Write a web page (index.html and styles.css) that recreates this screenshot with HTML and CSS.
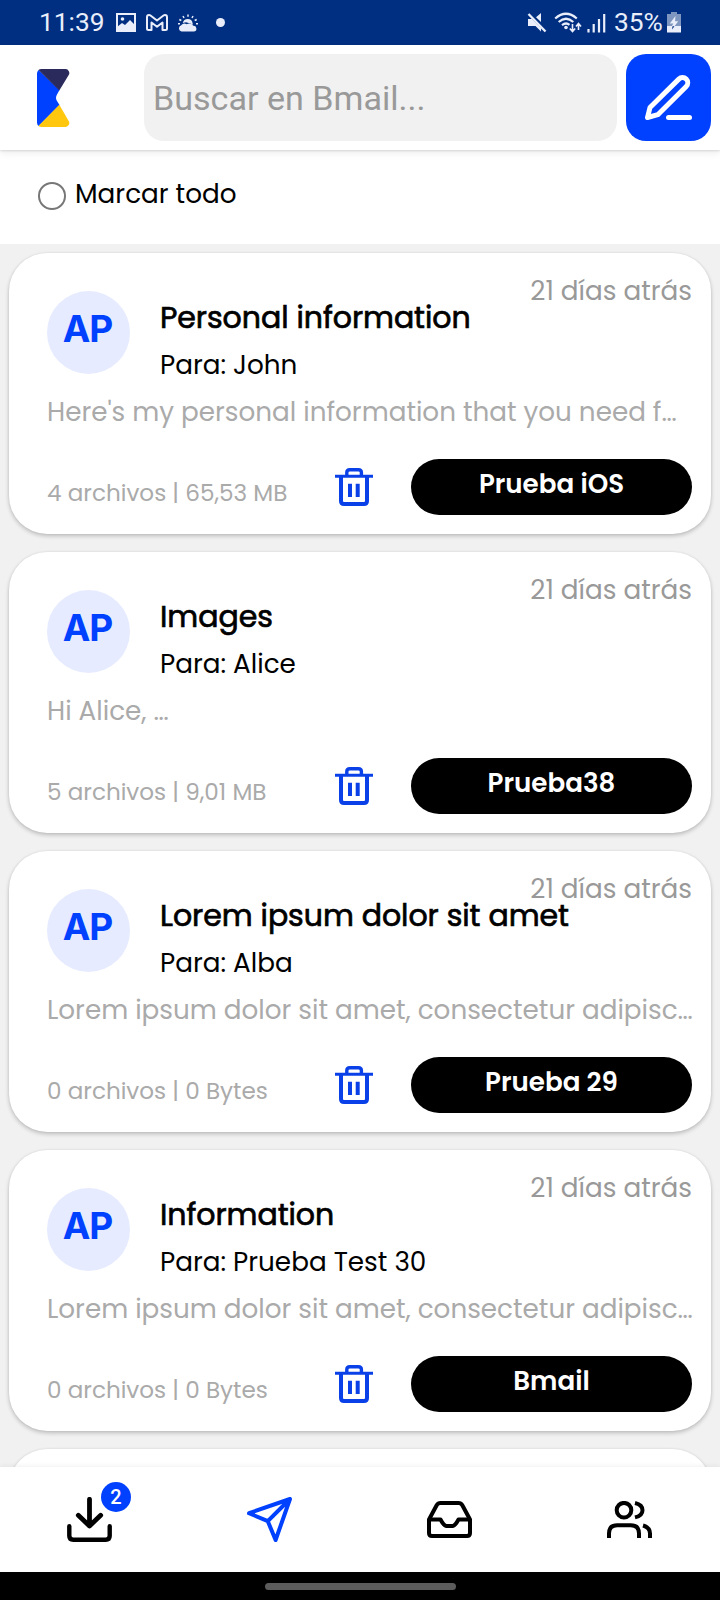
FILE: index.html
```html
<!DOCTYPE html>
<html lang="es">
<head>
<meta charset="utf-8">
<title>Bmail</title>
<link rel="stylesheet" href="styles.css">
</head>
<body>
<svg class="defs" aria-hidden="true">
  <symbol id="trash" viewBox="0 0 38 38">
    <path d="M0 8.3H38" stroke-width="3"/>
    <path d="M11.8 8V4.5Q11.8 1.7 14.8 1.7H23.4Q26.4 1.7 26.4 4.5V8" stroke-width="3.4"/>
    <path d="M6 8V33Q6 36 9 36H29Q32 36 32 33V8M15 15.7V29M22.7 15.7V29" stroke-width="4"/>
  </symbol>
</svg>
<div class="screen">
  <div class="status">
    <span class="clock">11:39</span>
    <svg class="st-image" width="20" height="19" viewBox="0 0 20 19"><path d="M1 1h18v17H1z" fill="none" stroke="#e9eefa" stroke-width="2"/><circle cx="6.5" cy="6" r="1.8"/><path d="M1 14l5-4 3 2 5-5 5 5v6H1z"/></svg>
    <svg class="st-mail" width="22" height="17" viewBox="0 0 22 17" fill="none"><path d="M1 3.2v11.3q0 1.5 1.5 1.5h3V8.5l5.500 4.200 5.500-4.200V16h3q1.500 0 1.500-1.500V3.200Q21 1 19 1q-.8 0-1.500.5L11 6.500 4.500 1.500Q3.800 1 3 1 1 1 1 3.200z" stroke="#e9eefa" stroke-width="2" stroke-linejoin="round"/></svg>
    <svg class="st-weather" width="22" height="18" viewBox="0 0 22 18"><path d="M4.500 17.500a3.200 3.200 0 0 1-.3-6.200 4 4 0 0 1 5.500-1 4.500 4.500 0 0 1 6.500 1.500 2.900 2.900 0 0 1 1 5.700z"/><path d="M5.800 9a5 5 0 0 1 9.800.2l.4 1.500-2.500-1.200-4.500-1.300z"/><path d="M11 .5v2.200M6 2l1 2M16 2l-1 2M2.300 5.500l2 1M19.700 5.500l-2 1M1 9.800h2M19 9.800h2" stroke="#e9eefa" stroke-width="1.500"/></svg>
    <span class="dot"></span>
    <svg class="st-mute" width="20" height="21" viewBox="0 0 20 21"><path d="M1 7h4l9 9v3.500L8.500 14H1zM9 5.300L14 1v9z"/><path d="M1.500 2L18.500 19.500" stroke="#e9eefa" stroke-width="2.400"/><path d="M3.800 1.300L19.800 17.500" stroke="#002f81" stroke-width="1"/></svg>
    <svg class="st-wifi" width="28" height="21" viewBox="0 0 28 21"><path d="M1.200 6.500Q12 -3 22.800 6.500M4.700 10Q12 3.500 19.300 10M8 13.200Q12 10 15.500 12.800" fill="none" stroke="#e9eefa" stroke-width="2.200"/><circle cx="12" cy="15.500" r="1.800"/><path d="M18.500 12v7M15.800 16.500l2.700 3 2.700-3M24.500 18v-6M22 14.500l2.500-3 2.500 3" fill="none" stroke="#e9eefa" stroke-width="1.600"/></svg>
    <svg class="st-signal" width="19" height="20" viewBox="0 0 19 20"><path d="M1.500 16v3.500M6.700 11v8.500M12 6v13.500M17.200 1v18.500" stroke="#e9eefa" stroke-width="2.200"/></svg>
    <span class="level">35%</span>
    <svg class="st-battery" width="14" height="21" viewBox="0 0 14 21"><path d="M4 0h6v2h4v12H0V2h4z" fill="#7f97c0"/><path d="M0 14h14v6.500H0z"/><path d="M8.500 4L2.800 11.500h3.500L5 14l2.500.2 3.700-5H8z"/><path d="M5.500 14.300L5 17.500l2.500-3.200z" fill="#002f81"/></svg>
  </div>

  <header class="topbar">
    <svg class="logo" width="33" height="58" viewBox="0 0 33 58">
      <path d="M1.500 1Q0 2.500 0 4.500V53.500Q0 55.500 1.500 57L22.500 36 20 32Q18 29 20 25.500L22.500 21z" fill="#0040ff"/>
      <path d="M1.500 1Q2.500 0 4.500 0H28A4 4 0 0 1 31.400 6.500L22.300 21.500z" fill="#2a2a5c"/>
      <path d="M1.500 57L22.300 35.800 31.400 51.500A4 4 0 0 1 28 58H4.500Q2.500 58 1.500 57z" fill="#ffc80f"/>
    </svg>
    <div class="search">Buscar en Bmail...</div>
    <div class="compose">
      <svg width="47" height="45" viewBox="0 0 47 45" fill="none" stroke="#fff" stroke-width="5" stroke-linejoin="round" stroke-linecap="round"><path d="M2.500 42.500L5 32.500 33.800 4.100A5.230 5.230 0 0 1 41.200 11.500L12.800 39.700z"/><path d="M23.500 42.500H44.500"/></svg>
    </div>
  </header>

  <div class="select-all"><span class="radio"></span><span class="select-label">Marcar todo</span></div>

  <main class="list">
    <article class="card">
      <div class="date">21 días atrás</div>
      <div class="head"><div class="avatar">AP</div><div class="who"><div class="title">Personal information</div><div class="to">Para: John</div></div></div>
      <div class="preview">Here's my personal information that you need f…</div>
      <div class="foot"><span class="files">4 archivos | 65,53 MB</span><svg class="trash"><use href="#trash"/></svg><span class="pill">Prueba iOS</span></div>
    </article>
    <article class="card">
      <div class="date">21 días atrás</div>
      <div class="head"><div class="avatar">AP</div><div class="who"><div class="title">Images</div><div class="to">Para: Alice</div></div></div>
      <div class="preview">Hi Alice, …</div>
      <div class="foot"><span class="files">5 archivos | 9,01 MB</span><svg class="trash"><use href="#trash"/></svg><span class="pill">Prueba38</span></div>
    </article>
    <article class="card">
      <div class="date">21 días atrás</div>
      <div class="head"><div class="avatar">AP</div><div class="who"><div class="title">Lorem ipsum dolor sit amet</div><div class="to">Para: Alba</div></div></div>
      <div class="preview">Lorem ipsum dolor sit amet, consectetur adipisc…</div>
      <div class="foot"><span class="files">0 archivos | 0 Bytes</span><svg class="trash"><use href="#trash"/></svg><span class="pill">Prueba 29</span></div>
    </article>
    <article class="card">
      <div class="date">21 días atrás</div>
      <div class="head"><div class="avatar">AP</div><div class="who"><div class="title">Information</div><div class="to">Para: Prueba Test 30</div></div></div>
      <div class="preview">Lorem ipsum dolor sit amet, consectetur adipisc…</div>
      <div class="foot"><span class="files">0 archivos | 0 Bytes</span><svg class="trash"><use href="#trash"/></svg><span class="pill">Bmail</span></div>
    </article>
    <article class="card card-next"></article>
  </main>

  <nav class="tabs">
    <div class="tab"><div class="icon-wrap">
      <svg width="45" height="45" viewBox="0 0 45 45" fill="none" stroke="#000" stroke-width="4.800" stroke-linecap="round" stroke-linejoin="round"><path d="M22.500 2.300V29M11.300 18.300L22.500 29 33.700 18.300"/><path d="M2.300 29.300V38.700Q2.300 42.700 6.300 42.700H38.700Q42.700 42.700 42.700 38.700V29.300" stroke-width="4.400"/></svg>
      <span class="badge">2</span></div></div>
    <div class="tab"><svg width="45" height="45" viewBox="0 0 45 45" fill="none" stroke="#0040ff" stroke-width="4" stroke-linejoin="round"><path d="M2 16.200L43 2 28.600 43 20.800 24.200zM43 2L20.800 24.200"/></svg></div>
    <div class="tab"><svg width="45" height="37" viewBox="0 0 45 37" fill="none" stroke="#000" stroke-width="4" stroke-linejoin="round"><path d="M13.500 2H31.500Q34 2 35.200 4L43 18.500V32Q43 35 40 35H5Q2 35 2 32V18.500L9.800 4Q11 2 13.500 2z"/><path d="M2 18.500H13.500Q17 25 19.500 25H25.500Q28 25 31.500 18.500H43"/></svg></div>
    <div class="tab"><svg width="45" height="37" viewBox="0 0 45 37" fill="none" stroke="#000" stroke-width="4"><circle cx="17" cy="9.200" r="7.300"/><path d="M28 2Q35.500 3.800 35.500 9.200T28 16.400M2 37V32.500Q2 24.200 10.200 24.200H23.800Q32 24.200 32 32.500V37M36 24.500Q43 26.500 43 32.500V37"/></svg></div>
  </nav>
  <div class="system"><span class="handle"></span></div>
</div>
</body>
</html>
```
FILE: styles.css
```css
* { box-sizing: border-box; }
body { margin: 0; font-family: Poppins, Inter, sans-serif; color: #000; }
.defs { display: none; }
.screen { width: 720px; height: 1600px; display: flex; flex-direction: column; overflow: hidden; background: #fff; white-space: nowrap; }

.status { height: 45px; flex: none; background: #002f81; display: flex; align-items: center; padding-left: 39px; color: #e9eefa; font: 26.3px/45px Roboto, sans-serif; fill: #e9eefa; }
.status svg { flex: none; }
.clock { width: 77px; }
.st-mail { margin-left: 10px; }
.st-weather { margin-left: 9px; }
.dot { width: 9px; height: 9px; border-radius: 50%; background: #e9eefa; margin-left: 17px; }
.st-mute { margin-left: 302px; }
.st-wifi { margin-left: 7px; }
.st-signal { margin-left: 5px; }
.level { margin-left: 8px; width: 53px; }

.topbar { height: 105px; flex: none; display: flex; align-items: center; padding: 0 9px 0 37px; background: #fff; position: relative; z-index: 1; box-shadow: 0 1px 2px rgba(0,0,0,.12), 0 3px 8px rgba(0,0,0,.07); }
.topbar .logo { flex: none; }
.search { width: 473px; height: 87px; margin-left: 74px; border-radius: 20px; background: #f1f1f1; padding-left: 9px; color: #999; font: 34.1px/88px Roboto, sans-serif; }
.compose { width: 85px; height: 87px; margin-left: 9px; border-radius: 20px; background: #0040ff; display: flex; align-items: center; justify-content: center; }

.select-all { height: 94px; flex: none; display: flex; padding-left: 38px; background: #fff; }
.radio { width: 28px; height: 28px; margin: 32px 9px 0 0; border: 2px solid #777; border-radius: 50%; }
.select-label { font-size: 26.25px; line-height: 88px; }

.list { flex: 1; min-height: 0; overflow: hidden; background: #f1f1f1; padding: 9px 9px 0; display: flex; flex-direction: column; gap: 18px; }
.card { height: 281px; flex: none; background: #fff; border-radius: 38px; padding: 24px 19px 0 38px; box-shadow: 0 2px 4px rgba(0,0,0,.22), 0 0 2px rgba(0,0,0,.08); }
.date { font-size: 26.25px; line-height: 28px; color: #999; text-align: right; }
.head { height: 97px; margin-top: -14px; display: flex; gap: 30px; }
.avatar { width: 83px; height: 83px; border-radius: 50%; background: #e6ebff; color: #0040ff; font: 700 37px/76px Inter, sans-serif; letter-spacing: -1px; padding-right: 2px; text-align: center; }
.who { padding-top: 3px; line-height: 47px; }
.title { font-size: 30px; letter-spacing: -.05px; -webkit-text-stroke: .7px #000; }
.to { font-size: 26.25px; line-height: 48px; }
.preview { font-size: 26.22px; line-height: 48px; color: #aaa; }
.foot { display: flex; margin-top: 23px; }
.files { width: 288px; font-size: 23.1px; line-height: 56px; padding-top: 6px; color: #aaa; }
.trash { width: 38px; height: 38px; margin-top: 9px; fill: none; stroke: #0a40e8; }
.pill { width: 281px; height: 56px; margin-left: 38px; border-radius: 28px; background: #000; color: #fff; font-weight: 600; font-size: 26.15px; line-height: 50px; text-align: center; }

.tabs { height: 105px; flex: none; display: flex; background: #fff; padding-right: 1px; position: relative; z-index: 1; box-shadow: 0 -1px 5px rgba(0,0,0,.06); }
.tab { width: 180px; flex: none; padding-right: 1px; display: flex; align-items: center; justify-content: center; }
.icon-wrap { position: relative; height: 45px; }
.badge { position: absolute; left: 34px; top: -15px; width: 30px; height: 30px; border-radius: 50%; background: #0040ff; color: #fff; font: 500 20px/30px Roboto, sans-serif; text-align: center; }
.system { height: 28px; flex: none; background: #000; display: flex; justify-content: center; padding-top: 11px; }
.handle { width: 191px; height: 7px; border-radius: 4px; background: #5c5c5c; }
```
